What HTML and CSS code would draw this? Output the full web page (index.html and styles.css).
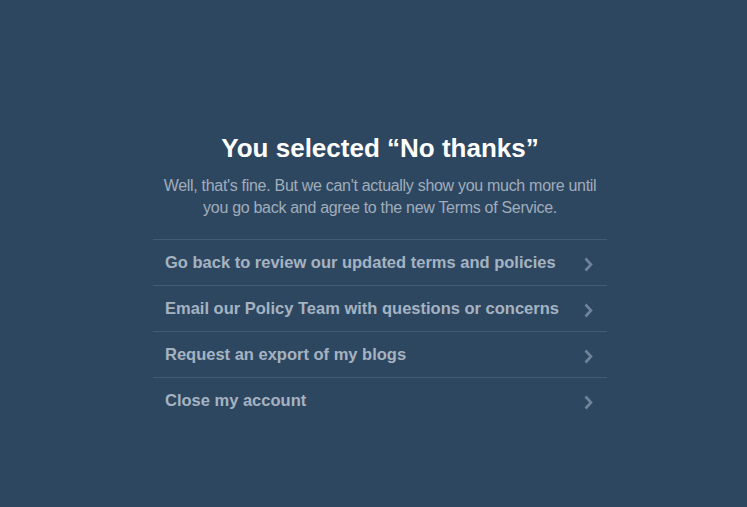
FILE: index.html
```html
<!DOCTYPE html>
<html lang="en">
<head>
<meta charset="utf-8">
<title>You selected “No thanks”</title>
<link rel="stylesheet" href="styles.css">
</head>
<body>
<main class="page">
  <section class="panel">
    <h1 class="title">You selected “No thanks”</h1>
    <p class="lead">Well, that's fine. But we can't actually show you much more until you go back and agree to the new Terms of Service.</p>
    <ul class="options">
      <li class="option"><a href="#">Go back to review our updated terms and policies<svg class="chev" viewBox="0 0 9 15" width="9" height="15"><path d="M1.5 1.5 L7 7.5 L1.5 13.5" fill="none" stroke="currentColor" stroke-width="2.6"/></svg></a></li>
      <li class="option"><a href="#">Email our Policy Team with questions or concerns<svg class="chev" viewBox="0 0 9 15" width="9" height="15"><path d="M1.5 1.5 L7 7.5 L1.5 13.5" fill="none" stroke="currentColor" stroke-width="2.6"/></svg></a></li>
      <li class="option"><a href="#">Request an export of my blogs<svg class="chev" viewBox="0 0 9 15" width="9" height="15"><path d="M1.5 1.5 L7 7.5 L1.5 13.5" fill="none" stroke="currentColor" stroke-width="2.6"/></svg></a></li>
      <li class="option"><a href="#">Close my account<svg class="chev" viewBox="0 0 9 15" width="9" height="15"><path d="M1.5 1.5 L7 7.5 L1.5 13.5" fill="none" stroke="currentColor" stroke-width="2.6"/></svg></a></li>
    </ul>
  </section>
</main>
</body>
</html>
```

FILE: styles.css
```css
html, body {
  margin: 0;
  padding: 0;
  height: 100%;
}
body {
  background: #2e4761;
  font-family: "Liberation Sans", Arial, sans-serif;
  color: #a5b3c1;
}
.page {
  padding: 133px 0 0 13px;
}
.panel {
  width: 454px;
  margin: 0 auto;
}
.title {
  margin: 0;
  font-size: 26px;
  line-height: 30px;
  font-weight: bold;
  color: #ffffff;
  text-align: center;
}
.lead {
  margin: 12px 0 0;
  font-size: 16px;
  line-height: 22px;
  letter-spacing: -0.3px;
  color: #a0adbb;
  text-align: center;
}
.options {
  list-style: none;
  margin: 20px 0 0;
  padding: 0;
}
.option {
  border-top: 1px solid #435a72;
}
.option a {
  display: flex;
  align-items: center;
  justify-content: space-between;
  padding: 12px 14px 13px 12px;
  font-size: 16.5px;
  line-height: 20px;
  font-weight: bold;
  color: #a5b3c1;
  text-decoration: none;
}
.chev {
  color: #6f839a;
  flex: none;
  margin-top: 5px;
}
```
